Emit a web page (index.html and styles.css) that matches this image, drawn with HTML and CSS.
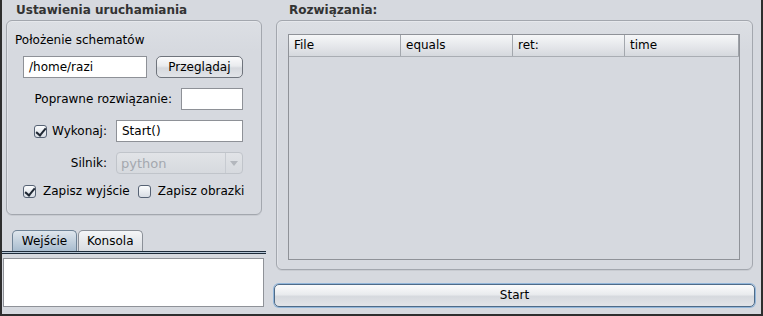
FILE: index.html
```html
<!DOCTYPE html>
<html lang="pl">
<head>
  <meta charset="UTF-8">
  <title>Ustawienia uruchamiania</title>
  <link rel="stylesheet" href="styles.css">
</head>
<body>
  <div class="window">
    <div class="left">
      <div class="title">Ustawienia uruchamiania</div>
      <div class="group settings">
        <div class="label-top">Położenie schematów</div>
        <div class="row path-row">
          <div class="field path">/home/razi</div>
          <div class="btn browse">Przeglądaj</div>
        </div>
        <div class="row">
          <span class="lbl">Poprawne rozwiązanie:</span>
          <div class="field small"></div>
        </div>
        <div class="row">
          <span class="check checked"></span>
          <span class="lbl check-lbl">Wykonaj:</span>
          <div class="field wide">Start()</div>
        </div>
        <div class="row">
          <span class="lbl">Silnik:</span>
          <div class="combo">
            <span class="combo-text">python</span>
            <span class="combo-arrow"></span>
          </div>
        </div>
        <div class="row checks">
          <span class="check checked"></span>
          <span class="lbl">Zapisz wyjście</span>
          <span class="check second"></span>
          <span class="lbl">Zapisz obrazki</span>
        </div>
      </div>

      <div class="tabs">
        <div class="tab active">Wejście</div>
        <div class="tab">Konsola</div>
      </div>
      <div class="tab-line"></div>
      <div class="textarea"></div>
    </div>

    <div class="right">
      <div class="title">Rozwiązania:</div>
      <div class="group results">
        <div class="table">
          <div class="thead">
            <div class="th">File</div>
            <div class="th">equals</div>
            <div class="th">ret:</div>
            <div class="th last">time</div>
          </div>
        </div>
      </div>
      <div class="btn start">Start</div>
    </div>
  </div>
</body>
</html>
```

FILE: styles.css
```css
body {
  margin: 0;
  font-family: "DejaVu Sans", sans-serif;
  font-size: 12px;
  color: #000;
  background: #d6d9df;
}
.window {
  width: 759px;
  height: 314px;
  display: flex;
  background: #d6d9df;
  border-left: 2px solid #2e2e2e;
  border-right: 2px solid #2e2e2e;
  border-bottom: 2px solid #2e2e2e;
}
.left {
  width: 264px;
  display: flex;
  flex-direction: column;
}
.right {
  flex: 1;
  display: flex;
  flex-direction: column;
  padding: 0 6px 0 8px;
}
.title {
  height: 20px;
  line-height: 21px;
  font-weight: bold;
  color: #333;
  padding-left: 14px;
  flex: none;
}
.right .title {
  padding-left: 15px;
}
.group {
  border: 1px solid #a3a7ae;
  border-radius: 6px;
  box-shadow: inset 0 1px 0 #e6e8ec, inset 1px 0 0 #e1e3e8, 0 1px 0 #c8cbd1;
  background: linear-gradient(#dcdfe4, #d6d9df 30px);
  flex: none;
}
.settings {
  margin-left: 4px;
  width: 254px;
  height: 193px;
}
.label-top {
  margin: 11px 0 0 8px;
  height: 16px;
  line-height: 16px;
}
.row {
  display: flex;
  align-items: center;
  justify-content: flex-end;
  gap: 9px;
  width: 236px;
  height: 22px;
  margin-top: 10px;
}
.path-row {
  margin-top: 8px;
  justify-content: flex-start;
  padding-left: 16px;
  width: 220px;
}
.field {
  box-sizing: border-box;
  height: 22px;
  background: #fff;
  border: 1px solid #8e9197;
  padding: 0 5px;
  line-height: 20px;
}
.path { width: 125px; }
.small { width: 62px; }
.wide { width: 127px; }
.btn {
  box-sizing: border-box;
  border: 1px solid #6f747c;
  border-radius: 5px;
  background: linear-gradient(#fbfbfc, #e9ebee 45%, #d6d9de 55%, #e2e4e8);
  text-align: center;
}
.browse {
  width: 88px;
  height: 22px;
  line-height: 20px;
}
.lbl {
  white-space: nowrap;
  line-height: 16px;
}
.check-lbl {
  margin-left: -4px;
}
.check {
  box-sizing: border-box;
  width: 13px;
  height: 13px;
  border: 1px solid #566274;
  border-radius: 3px;
  background: linear-gradient(#fbfcfd, #d8dde4);
  position: relative;
  flex: none;
}
.check.checked::after {
  content: "";
  position: absolute;
  left: 3px;
  top: 0;
  width: 4px;
  height: 8px;
  border-right: 2px solid #1f2733;
  border-bottom: 2px solid #1f2733;
  transform: rotate(40deg);
}
.combo {
  box-sizing: border-box;
  width: 127px;
  height: 22px;
  border: 1px solid #c0c4ca;
  border-radius: 4px;
  background: linear-gradient(#e1e3e7, #d6d9de);
  display: flex;
  align-items: center;
}
.combo-text {
  flex: 1;
  padding-left: 4px;
  color: #a4a8af;
  font-size: 13px;
}
.combo-arrow {
  width: 16px;
  height: 20px;
  border-left: 1px solid #c7cbd1;
  position: relative;
}
.combo-arrow::after {
  content: "";
  position: absolute;
  left: 4px;
  top: 8px;
  border-left: 4px solid transparent;
  border-right: 4px solid transparent;
  border-top: 5px solid #b3b7bd;
}
.checks {
  justify-content: flex-start;
  gap: 7px;
  padding-left: 16px;
  width: 230px;
  height: 16px;
  margin-top: 9px;
}
.checks .second {
  margin-left: 1px;
}
.tabs {
  display: flex;
  margin-top: 15px;
  padding-left: 10px;
  height: 21px;
  flex: none;
}
.tab {
  box-sizing: border-box;
  height: 21px;
  line-height: 20px;
  padding: 0 8px;
  border: 1px solid #8b9098;
  border-bottom: none;
  border-radius: 5px 5px 0 0;
  background: linear-gradient(#f4f5f7, #d9dce1);
  margin-right: 1px;
}
.tab.active {
  width: 65px;
  text-align: center;
  background: linear-gradient(#dfe6ed, #a8bccf);
  border-color: #6f8396;
}
.tab-line {
  height: 1px;
  flex: none;
  border-top: 1px solid #1d2b3a;
  border-bottom: 1px solid #1d2b3a;
  background: #b6c6d6;
}
.textarea {
  box-sizing: border-box;
  margin: 4px 0 0 1px;
  width: 261px;
  height: 49px;
  flex: none;
  background: #fff;
  border: 1px solid #8f9298;
}
.results {
  box-sizing: border-box;
  margin: 0 2px;
  height: 250px;
  padding: 13px 12px 9px 11px;
}
.table {
  height: 100%;
  box-sizing: border-box;
  border: 1px solid #8f9298;
  background: #d6d9df;
}
.thead {
  display: flex;
  height: 21px;
  background: linear-gradient(#f6f7f8, #e3e5e9 60%, #d5d8dd);
  border-bottom: 1px solid #a9adb3;
}
.th {
  width: 112px;
  line-height: 21px;
  padding-left: 5px;
  box-sizing: border-box;
  border-right: 1px solid #a3a7ad;
}
.th.last {
  flex: 1;
  border-right: 1px solid #9ea2a8;
}
.start {
  margin-top: 14px;
  height: 23px;
  line-height: 21px;
  flex: none;
  border-color: #4f6b88;
  box-shadow: 0 0 0 1px #92b6da;
}
```
